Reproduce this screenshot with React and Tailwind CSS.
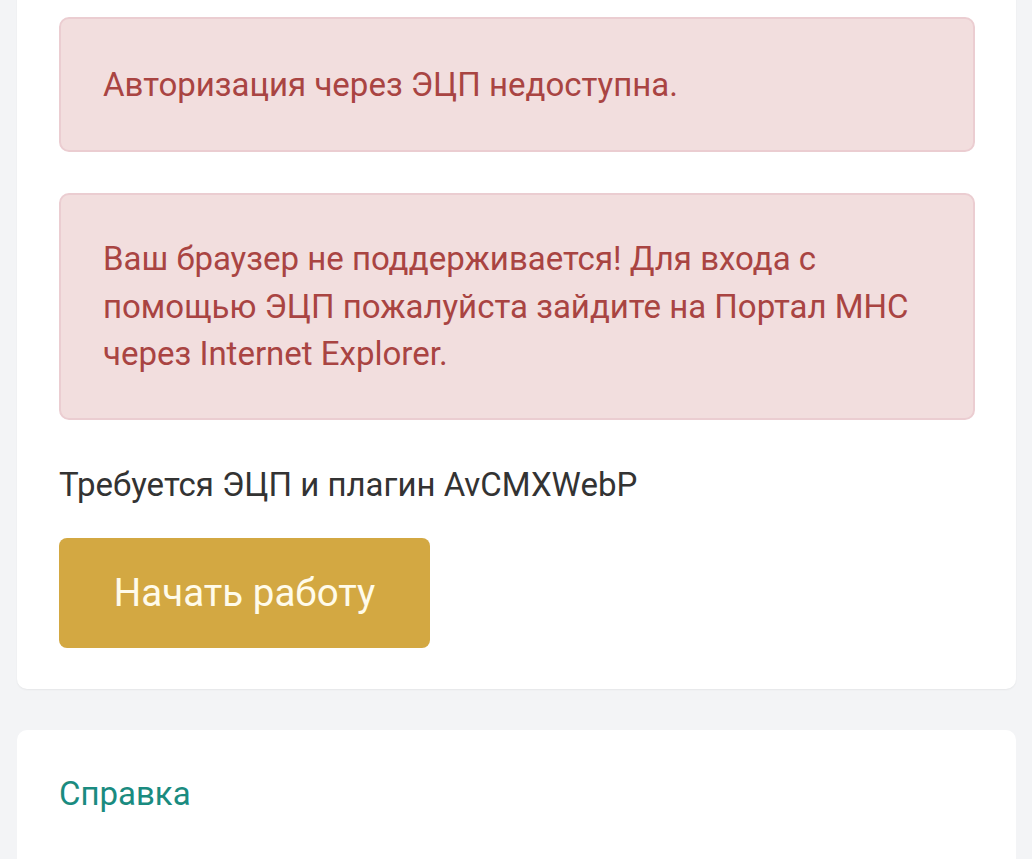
export default function App() {
  return (
    <div className="min-h-[859px] bg-[#f3f4f6] pl-[17px] pr-[16px] pb-10 overflow-hidden" style={{ fontFamily: "Roboto, 'Noto Sans', sans-serif" }}>
      <div className="-mt-[24px] rounded-[10px] bg-white pl-[42px] pr-[41px] pt-[41px] pb-[41px] shadow-[0_1px_2px_rgba(0,0,0,0.06)]">
        <div className="rounded-[10px] border-2 border-[#ebcdd1] bg-[#f2dede] px-[42px] py-[41.5px] text-[33px] leading-[47.5px] text-[#a94442]">
          Авторизация через ЭЦП недоступна.
        </div>
        <div className="mt-[41px] rounded-[10px] border-2 border-[#ebcdd1] bg-[#f2dede] px-[42px] py-[40.5px] text-[33px] leading-[47.5px] text-[#a94442]">
          Ваш браузер не поддерживается! Для входа с помощью ЭЦП пожалуйста зайдите на Портал МНС через Internet Explorer.
        </div>
        <p className="mt-[41px] text-[33px] leading-[47.5px] text-[#333333]">Требуется ЭЦП и плагин AvCMXWebP</p>
        <button className="mt-[29px] flex h-[110px] w-[371px] items-center justify-center rounded-[8px] bg-[#d3a842] text-[38.5px] text-[#fffbea]">
          Начать работу
        </button>
      </div>
      <div className="mt-[41px] rounded-t-[10px] bg-white px-[42px] pt-[40px] pb-[60px]">
        <a className="text-[33px] leading-[48px] text-[#1a8b80]">Справка</a>
      </div>
    </div>
  );
}
